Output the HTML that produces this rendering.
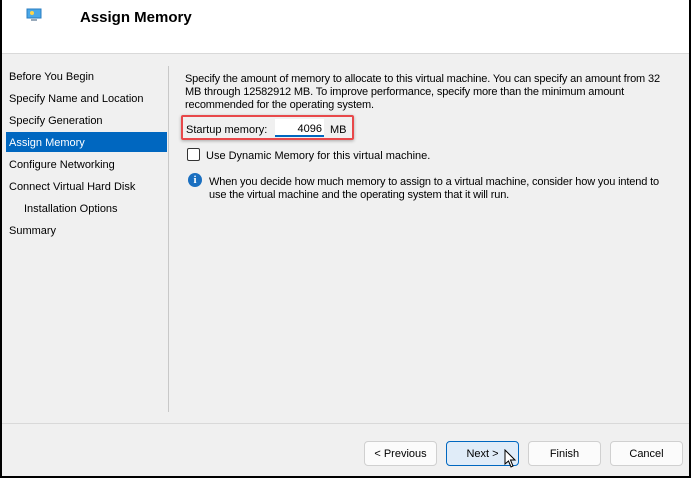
<!DOCTYPE html>
<html><head><style>
body{margin:0;width:691px;height:480px;overflow:hidden;font-family:"Liberation Sans",sans-serif;font-size:11px;color:#000}
.frame{position:absolute;left:0;top:0;width:687px;height:476px;border:2px solid #000;border-top:none;background:#f0f0f0}
.hdr{position:absolute;left:0;top:0;width:687px;height:53px;background:#fff;border-bottom:1px solid #d9d9d9}
.title{position:absolute;left:78px;top:9px;font-size:15px;font-weight:bold}
.nav div{position:absolute;left:7px;height:20px;line-height:22px;width:158px}
.sel{background:#0067c0;color:#fff;left:4px!important;padding-left:3px;width:158px!important}
.vl{position:absolute;left:166px;top:66px;width:1px;height:346px;background:#c8c8c8}
.hl{position:absolute;left:0;top:423px;width:687px;height:1px;background:#d9d9d9}
.btn{position:absolute;top:441px;height:23px;width:71px;border:1px solid #d0d0d0;background:#fbfbfb;border-radius:4px;text-align:center;line-height:25px}
</style></head><body>
<div class="frame">
<div class="hdr">
<svg style="position:absolute;left:24px;top:8px" width="16" height="14"><rect x="1" y="1" width="14" height="9" fill="#4aa8e8" stroke="#2a7cc0"/><circle cx="6" cy="5" r="2" fill="#ffd54a"/><rect x="5" y="11" width="6" height="2" fill="#9ab"/></svg>
<div class="title">Assign Memory</div>
</div>
<div class="nav">
<div style="top:66px">Before You Begin</div>
<div style="top:88px">Specify Name and Location</div>
<div style="top:110px">Specify Generation</div>
<div class="sel" style="top:132px">Assign Memory</div>
<div style="top:154px">Configure Networking</div>
<div style="top:176px">Connect Virtual Hard Disk</div>
<div style="top:198px;left:22px">Installation Options</div>
<div style="top:220px">Summary</div>
</div>
<div class="vl"></div>
<div style="position:absolute;left:183px;top:73px;width:484px;line-height:13px;letter-spacing:-0.15px">Specify the amount of memory to allocate to this virtual machine. You can specify an amount from 32 MB through 12582912 MB. To improve performance, specify more than the minimum amount recommended for the operating system.</div>
<div style="position:absolute;left:179px;top:115px;width:173px;height:25px;border:2px solid #e8484a;box-sizing:border-box;border-radius:2px;box-shadow:0 1px 3px rgba(0,0,0,.3)"></div>
<div style="position:absolute;left:184px;top:124px">Startup memory:</div>
<div style="position:absolute;left:273px;top:119px;width:49px;height:18px;background:#fff;border-bottom:2px solid #0067c0;text-align:right;line-height:21px;box-sizing:border-box;padding-right:2px">4096</div>
<div style="position:absolute;left:328px;top:124px">MB</div>
<div style="position:absolute;left:185px;top:148px;width:11px;height:11px;border:1px solid #333;border-radius:2px;background:#fff"></div>
<div style="position:absolute;left:204px;top:150px">Use Dynamic Memory for this virtual machine.</div>
<div style="position:absolute;left:186px;top:173px;width:14px;height:14px;border-radius:50%;background:#1a6fc0;color:#fff;font-weight:bold;font-size:11px;text-align:center;line-height:14px;font-family:'Liberation Serif',serif">i</div>
<div style="position:absolute;left:207px;top:176px;width:468px;line-height:13px;letter-spacing:-0.15px">When you decide how much memory to assign to a virtual machine, consider how you intend to use the virtual machine and the operating system that it will run.</div>
<div class="hl"></div>
<div class="btn" style="left:362px">&lt; Previous</div>
<div class="btn" style="left:444px;background:#e0ecf8;border-color:#0067c0">Next &gt;</div>
<div class="btn" style="left:526px">Finish</div>
<div class="btn" style="left:608px">Cancel</div>
<svg style="position:absolute;left:502px;top:449px" width="14" height="20"><path d="M1 1 L1 15 L4.5 12 L7 18 L9 17 L6.5 11 L11 11 Z" fill="#fff" stroke="#000" stroke-width="1"/></svg>
</div>
</body></html>
